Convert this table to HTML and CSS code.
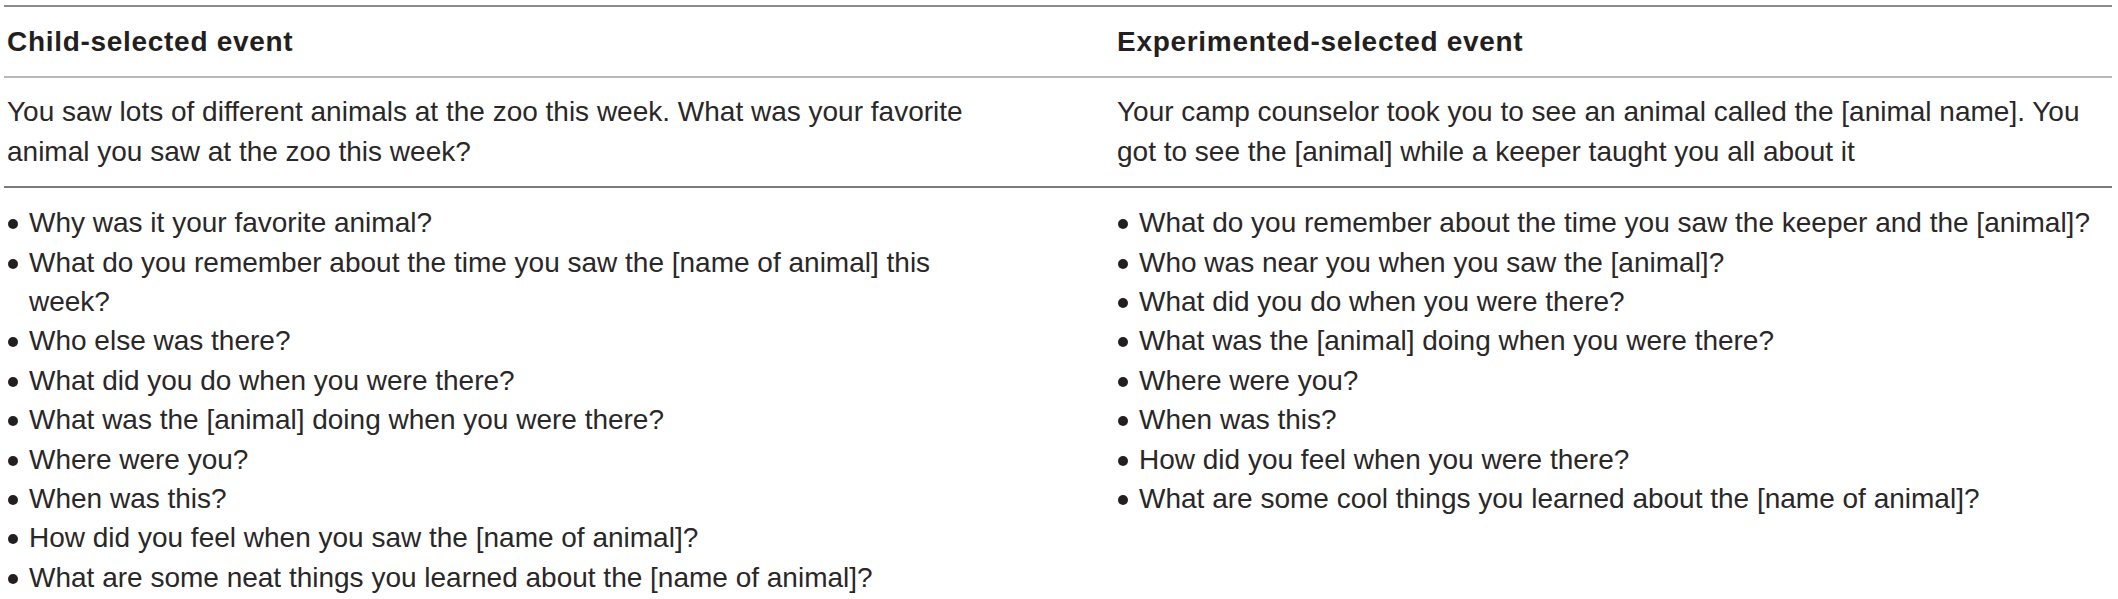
FILE: index.html
```html
<!DOCTYPE html>
<html lang="en">
<head>
<meta charset="utf-8">
<title>Event questions</title>
<link rel="stylesheet" href="styles.css">
</head>
<body>
<table class="qtable">
  <colgroup>
    <col class="col-left">
    <col class="col-right">
  </colgroup>
  <thead>
    <tr>
      <th class="cell-left">Child-selected event</th>
      <th class="cell-right">Experimented-selected event</th>
    </tr>
  </thead>
  <tbody>
    <tr class="prompt-row">
      <td class="cell-left">You saw lots of different animals at the zoo this week. What was your favorite animal you saw at the zoo this week?</td>
      <td class="cell-right">Your camp counselor took you to see an animal called the [animal name]. You got to see the [animal] while a keeper taught you all about it</td>
    </tr>
    <tr class="question-row">
      <td class="cell-left">
        <ul class="qlist">
          <li>Why was it your favorite animal?</li>
          <li>What do you remember about the time you saw the [name of animal] this week?</li>
          <li>Who else was there?</li>
          <li>What did you do when you were there?</li>
          <li>What was the [animal] doing when you were there?</li>
          <li>Where were you?</li>
          <li>When was this?</li>
          <li>How did you feel when you saw the [name of animal]?</li>
          <li>What are some neat things you learned about the [name of animal]?</li>
        </ul>
      </td>
      <td class="cell-right">
        <ul class="qlist">
          <li>What do you remember about the time you saw the keeper and the [animal]?</li>
          <li>Who was near you when you saw the [animal]?</li>
          <li>What did you do when you were there?</li>
          <li>What was the [animal] doing when you were there?</li>
          <li>Where were you?</li>
          <li>When was this?</li>
          <li>How did you feel when you were there?</li>
          <li>What are some cool things you learned about the [name of animal]?</li>
        </ul>
      </td>
    </tr>
  </tbody>
</table>
</body>
</html>
```
FILE: styles.css
```css
html, body {
  margin: 0;
  padding: 0;
  background: #ffffff;
}

body {
  font-family: "Liberation Sans", Arial, Helvetica, sans-serif;
  color: #2a2728;
}

.qtable {
  margin: 5px 0 0 4px;
  width: 2108px;
  table-layout: fixed;
  border-collapse: separate;
  border-spacing: 0;
  font-size: 28px;
  line-height: 39.4px;
}

.col-left {
  width: 1110px;
}

.col-right {
  width: 998px;
}

.qtable th,
.qtable td {
  text-align: left;
  vertical-align: top;
  padding: 0;
}

.cell-left {
  padding-left: 3px !important;
  padding-right: 122px !important;
}

.cell-right {
  padding-left: 3px !important;
  padding-right: 0 !important;
}

.qtable th {
  font-weight: bold;
  letter-spacing: 0.7px;
  color: #231f20;
  border-top: 2px solid #8c8c8c;
  border-bottom: 2px solid #b8b8b8;
  padding-top: 15px;
  padding-bottom: 15px;
}

.prompt-row td {
  padding-top: 14px;
  padding-bottom: 15px;
  border-bottom: 2px solid #7a7a7a;
}

.question-row td {
  padding-top: 15px;
}

.qlist {
  list-style: none;
  margin: 0;
  padding: 0;
}

.qlist li {
  display: flex;
  align-items: flex-start;
}

.qlist li::before {
  content: "";
  flex: 0 0 10px;
  height: 10px;
  margin-top: 16px;
  margin-left: 1px;
  margin-right: 11px;
  border-radius: 50%;
  background: #231f20;
}
```
